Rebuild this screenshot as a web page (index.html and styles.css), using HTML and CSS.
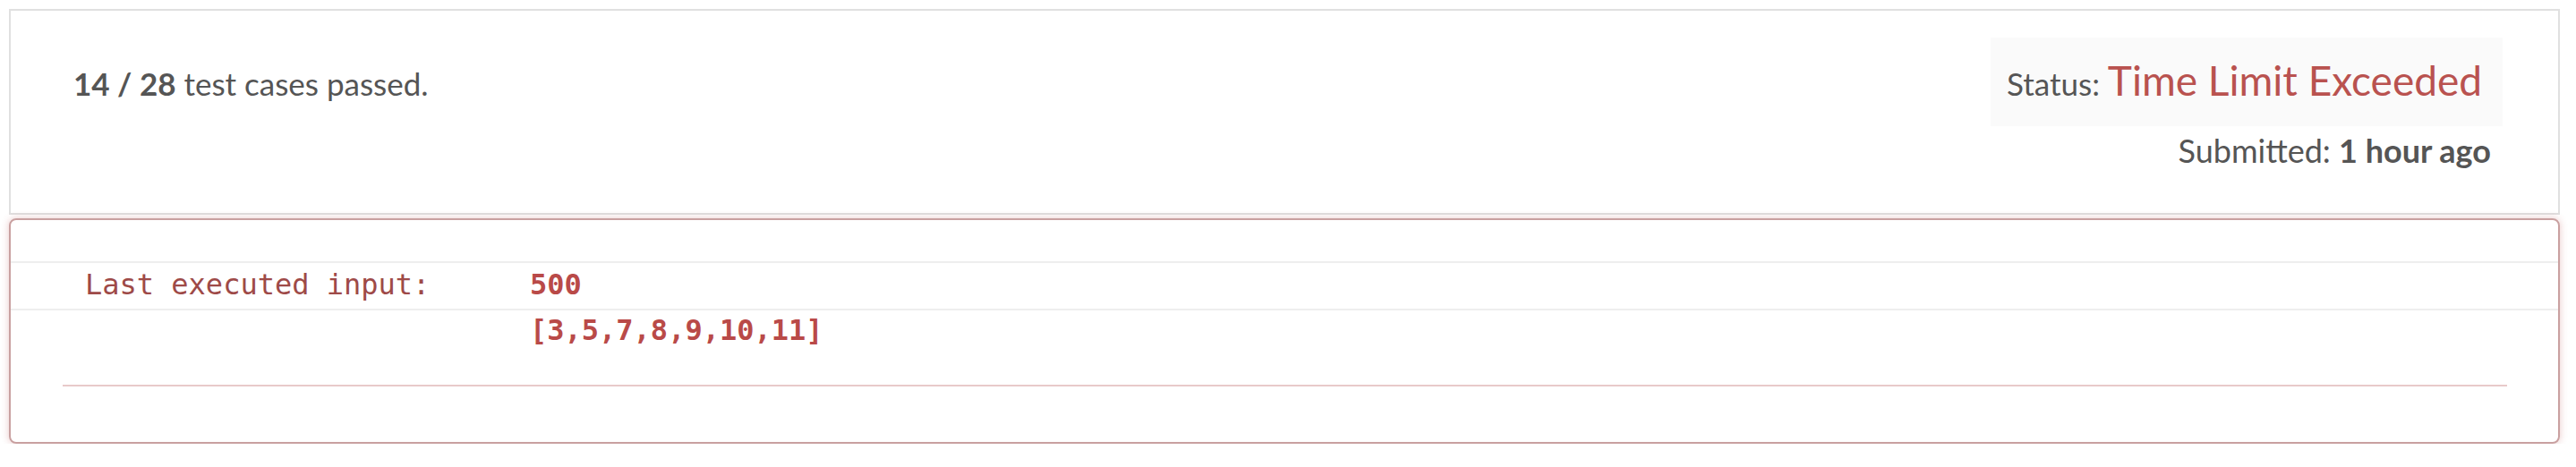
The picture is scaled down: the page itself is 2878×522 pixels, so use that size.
FILE: index.html
```html
<!DOCTYPE html>
<html lang="en">

<head>
    <meta charset="UTF-8">
    <meta name="viewport" content="width=device-width, initial-scale=1.0">
    <title>Submission Detail</title>
    <link rel="stylesheet" href="styles.css">
</head>

<body>

<div class="submission">
    <div class="summary">
        <div class="passed"><strong>14 / 28</strong> test cases passed.</div>
        <div class="result">
            <div class="status">Status: <span class="status-text">Time Limit Exceeded</span></div>
            <div class="submitted">Submitted: <strong>1 hour ago</strong></div>
        </div>
    </div>

    <div class="error-panel">
        <div class="row row-empty"></div>
        <div class="row row-input">
            <span class="label">Last executed input:</span>
            <span class="value">500</span>
        </div>
        <div class="row row-more">
            <span class="label"></span>
            <span class="value">[3,5,7,8,9,10,11]</span>
        </div>
        <hr class="divider">
    </div>
</div>

</body>
</html>
```

FILE: styles.css
```css
        body {
            font-family: Lato, "Open Sans", sans-serif;
            background-color: #fff;
            color: #555;
            margin: 0;
            padding: 10px 18px 0 10px;
        }

        .summary {
            display: flex;
            justify-content: space-between;
            align-items: baseline;
            height: 230px;
            box-sizing: border-box;
            border: 2px solid #e0e0e0;
            padding: 30px 62px 0 70px;
        }

        .passed {
            font-size: 35px;
        }

        .passed strong, .submitted strong {
            font-weight: 700;
            color: #555;
        }

        .result {
            display: flex;
            flex-direction: column;
            align-items: flex-end;
        }

        .status {
            background-color: #fafafa;
            padding: 14px 23px 14px 18px;
            font-size: 35px;
            line-height: 67px;
        }

        .status-text {
            font-size: 46px;
            color: #b9524f;
        }

        .submitted {
            font-size: 36px;
            line-height: 50px;
            margin-top: 2px;
            padding-right: 13px;
        }

        .error-panel {
            margin-top: 4px;
            height: 252px;
            box-sizing: border-box;
            border: 2px solid #c9a0a0;
            border-radius: 8px;
            box-shadow: 0 0 8px rgba(185, 74, 72, 0.3);
            font-family: "DejaVu Sans Mono", monospace;
            font-size: 32px;
            color: #b94a48;
        }

        .row {
            display: grid;
            grid-template-columns: 580px 1fr;
        }

        .row-empty {
            height: 46px;
            border-bottom: 2px solid #eee;
        }

        .row-input {
            line-height: 48px;
            padding-bottom: 3px;
            border-bottom: 2px solid #eee;
        }

        .row-more {
            line-height: 44px;
        }

        .label {
            padding-left: 83px;
            color: #9e4a48;
        }

        .value {
            font-weight: bold;
        }

        .divider {
            border: none;
            border-top: 2px solid #e8caca;
            margin: 39px 57px 0 58px;
        }
```
